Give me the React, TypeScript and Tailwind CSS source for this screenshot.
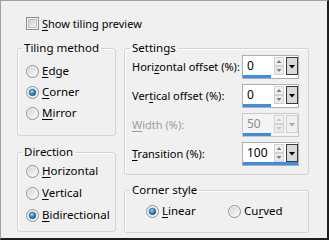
import React from "react";

const FONT = { fontFamily: '"Noto Sans", "Open Sans", sans-serif' };

function U({ children }: { children: React.ReactNode }) {
  return <span className="underline underline-offset-[2px] decoration-[1px]">{children}</span>;
}

function Radio({ checked }: { checked?: boolean }) {
  return (
    <svg width="13" height="13" viewBox="0 0 13 13" className="shrink-0">
      <defs>
        <linearGradient id="rg" x1="0" y1="0" x2="1" y2="1">
          <stop offset="0" stopColor="#d2d4d6" />
          <stop offset="1" stopColor="#fbfbfb" />
        </linearGradient>
        <radialGradient id="rb" cx="0.4" cy="0.35" r="0.7">
          <stop offset="0" stopColor="#a9dcf7" />
          <stop offset="0.5" stopColor="#2f8fd0" />
          <stop offset="1" stopColor="#0c4f80" />
        </radialGradient>
      </defs>
      <circle cx="6.5" cy="6.5" r="6" fill="#f4f4f4" stroke="#8e8f8f" />
      <circle cx="6.5" cy="6.5" r="4.5" fill="url(#rg)" />
      {checked && <circle cx="6.5" cy="6.5" r="3.3" fill="url(#rb)" stroke="#1b5d8a" strokeWidth="0.6" />}
    </svg>
  );
}

function Checkbox() {
  return (
    <svg width="13" height="13" viewBox="0 0 13 13" className="shrink-0">
      <defs>
        <linearGradient id="cg" x1="0" y1="0" x2="1" y2="1">
          <stop offset="0" stopColor="#cbcdcf" />
          <stop offset="1" stopColor="#f7f7f7" />
        </linearGradient>
      </defs>
      <rect x="0.5" y="0.5" width="12" height="12" fill="#f6f6f6" stroke="#8e8f8f" />
      <rect x="2.5" y="2.5" width="8" height="8" fill="url(#cg)" stroke="#bdbfc2" />
    </svg>
  );
}

function Spin({ value, bar, disabled }: { value: string; bar: number; disabled?: boolean }) {
  const arrow = disabled ? "#c4c8cc" : "#6e7f97";
  const btnBorder = disabled ? "#cfcfcf" : "#3a3a3a";
  const tri = disabled ? "#a8a8a8" : "#000";
  return (
    <div
      className={`flex h-[24px] w-[57px] flex-col border ${disabled ? "border-[#c9c9c9] bg-[#f4f4f4]" : "border-[#abadb3] bg-white"}`}
    >
      <div className="flex h-[19px] items-start">
        <div
          className={`h-[18px] w-[31px] pl-[4px] text-[12px] leading-[19px] ${disabled ? "text-[#8d8d8d]" : "text-black"}`}
        >
          {value}
        </div>
        <svg width="10" height="18" viewBox="0 0 10 18" className="mt-[1px] shrink-0">
          <rect x="0.5" y="0.5" width="9" height="8" fill="#f1f1f1" stroke="#d2d2d2" />
          <rect x="0.5" y="9.5" width="9" height="8" fill="#ebebeb" stroke="#d2d2d2" />
          <path d="M2.5 6 L5 3 L7.5 6 Z" fill={arrow} />
          <path d="M2.5 12 L5 15 L7.5 12 Z" fill={arrow} />
        </svg>
        <div className="ml-[2px] mt-[1px] flex h-[18px] w-[12px] items-center justify-center">
          <svg width="12" height="18" viewBox="0 0 12 18">
            <rect x="0.5" y="0.5" width="11" height="17" fill={disabled ? "#f0f0f0" : "#d9d9d9"} stroke={btnBorder} />
            <path d="M3 8 L9 8 L6 11.5 Z" fill={tri} />
          </svg>
        </div>
      </div>
      <div className="h-[3px] bg-[#3b8ee2]" style={{ width: bar }} />
    </div>
  );
}

function Group({
  title,
  className,
  legendClass,
  children,
}: {
  title: React.ReactNode;
  className: string;
  legendClass: string;
  children: React.ReactNode;
}) {
  return (
    <fieldset className={`rounded-[3px] border border-[#d3d3d3] shadow-[inset_1px_1px_0_#ffffff] ${className}`}>
      <legend className={`px-[2px] text-[11.5px] leading-[14px] text-black ${legendClass}`}>{title}</legend>
      {children}
    </fieldset>
  );
}

function RadioRow({ checked, children }: { checked?: boolean; children: React.ReactNode }) {
  return (
    <div className="flex h-[16px] items-center gap-[3px] text-[11.5px] leading-[16px] text-black">
      <Radio checked={checked} />
      <span>{children}</span>
    </div>
  );
}

function SettingRow({
  label,
  value,
  bar,
  disabled,
}: {
  label: React.ReactNode;
  value: string;
  bar: number;
  disabled?: boolean;
}) {
  return (
    <div className="flex h-[24px] items-center justify-between">
      <span className={`whitespace-nowrap text-[11px] leading-[16px] ${disabled ? "text-[#9d9d9d]" : "text-black"}`}>
        {label}
      </span>
      <Spin value={value} bar={bar} disabled={disabled} />
    </div>
  );
}

export default function App() {
  return (
    <div
      className="h-[240px] w-[329px] overflow-hidden border border-b-[2px] border-r-[2px] border-l-[#a0a0a0] border-t-[#a0a0a0] border-b-[#1e1e1e] border-r-[#1e1e1e] bg-[#f0f0f0]"
      style={FONT}
    >
      <div className="mt-[16px] flex h-[13px] items-center gap-[3px] pl-[25px] text-[11px] leading-[16px] text-black">
        <Checkbox />
        <span>
          <U>S</U>how tiling preview
        </span>
      </div>
      <div className="mt-[11px] flex gap-[8px] pl-[16px]">
        <div className="flex w-[99px] flex-col gap-[9px]">
          <Group title="Tiling method" className="h-[95px]" legendClass="ml-[4px]">
            <div className="flex flex-col gap-[5px] pl-[8px] pt-[8px]">
              <RadioRow>
                <U>E</U>dge
              </RadioRow>
              <RadioRow checked>
                <U>C</U>orner
              </RadioRow>
              <RadioRow>
                <U>M</U>irror
              </RadioRow>
            </div>
          </Group>
          <Group title="Direction" className="h-[87px]" legendClass="ml-[4px]">
            <div className="flex flex-col gap-[6px] pl-[8px] pt-[4px]">
              <RadioRow>
                <U>H</U>orizontal
              </RadioRow>
              <RadioRow>
                <U>V</U>ertical
              </RadioRow>
              <RadioRow checked>
                <U>B</U>idirectional
              </RadioRow>
            </div>
          </Group>
        </div>
        <div className="flex w-[185px] flex-col gap-[8px]">
          <Group title="Settings" className="h-[134px]" legendClass="ml-[5px]">
            <div className="flex flex-col gap-[5px] pl-[7px] pr-[9px]">
              <SettingRow
                label={
                  <>
                    Hori<U>z</U>ontal offset (%):
                  </>
                }
                value="0"
                bar={28}
              />
              <SettingRow
                label={
                  <>
                    Ver<U>t</U>ical offset (%):
                  </>
                }
                value="0"
                bar={28}
              />
              <SettingRow
                label={
                  <>
                    <U>W</U>idth (%):
                  </>
                }
                value="50"
                bar={28}
                disabled
              />
              <SettingRow
                label={
                  <>
                    <U>T</U>ransition (%):
                  </>
                }
                value="100"
                bar={55}
              />
            </div>
          </Group>
          <Group title="Corner style" className="h-[50px]" legendClass="ml-[5px]">
            <div className="flex pl-[21px] pt-[6px]">
              <div className="w-[82px]">
                <RadioRow checked>
                  <U>L</U>inear
                </RadioRow>
              </div>
              <RadioRow>
                Cu<U>r</U>ved
              </RadioRow>
            </div>
          </Group>
        </div>
      </div>
    </div>
  );
}
